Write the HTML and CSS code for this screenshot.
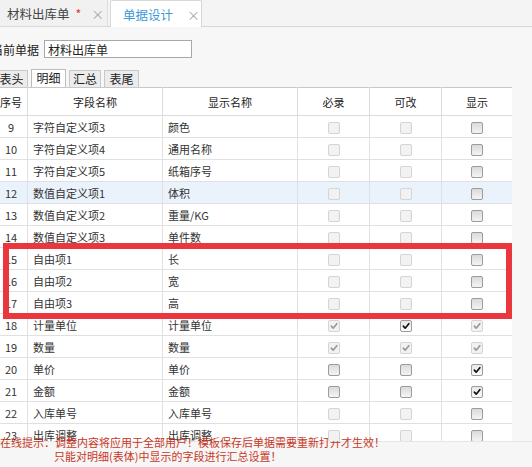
FILE: index.html
```html
<!DOCTYPE html>
<html lang="zh-CN">
<head>
<meta charset="utf-8">
<title>单据设计</title>
<link rel="stylesheet" href="styles.css">
</head>
<body>
<div class="tabbar">
  <div class="tab tab-doc"><span class="tab-title">材料出库单</span><span class="star">*</span><span class="close">×</span></div>
  <div class="tab tab-active"><span class="tab-title">单据设计</span><span class="close">×</span></div>
</div>
<div class="main">
  <div class="current">
    <span class="current-label">当前单据</span>
    <input class="doc-input" type="text" value="材料出库单">
  </div>
  <div class="subtabs">
    <div class="subtab w33">表头</div>
    <div class="subtab w35 active">明细</div>
    <div class="subtab w32">汇总</div>
    <div class="subtab w35">表尾</div>
  </div>
  <div class="grid-wrap">
    <table class="grid">
      <colgroup>
        <col class="c-no"><col class="c-field"><col class="c-name"><col class="c-chk"><col class="c-chk"><col class="c-last">
      </colgroup>
      <thead>
        <tr><th>序号</th><th>字段名称</th><th>显示名称</th><th>必录</th><th>可改</th><th>显示</th></tr>
      </thead>
      <tbody>
        <tr><td class="no">9</td><td>字符自定义项3</td><td>颜色</td><td class="ck"><span class="cb dis"></span></td><td class="ck"><span class="cb dis"></span></td><td class="ck"><span class="cb en"></span></td></tr>
        <tr><td class="no">10</td><td>字符自定义项4</td><td>通用名称</td><td class="ck"><span class="cb dis"></span></td><td class="ck"><span class="cb dis"></span></td><td class="ck"><span class="cb en"></span></td></tr>
        <tr><td class="no">11</td><td>字符自定义项5</td><td>纸箱序号</td><td class="ck"><span class="cb dis"></span></td><td class="ck"><span class="cb dis"></span></td><td class="ck"><span class="cb en"></span></td></tr>
        <tr class="sel"><td class="no">12</td><td>数值自定义项1</td><td>体积</td><td class="ck"><span class="cb dis"></span></td><td class="ck"><span class="cb dis"></span></td><td class="ck"><span class="cb en"></span></td></tr>
        <tr><td class="no">13</td><td>数值自定义项2</td><td>重量/KG</td><td class="ck"><span class="cb dis"></span></td><td class="ck"><span class="cb dis"></span></td><td class="ck"><span class="cb en"></span></td></tr>
        <tr><td class="no">14</td><td>数值自定义项3</td><td>单件数</td><td class="ck"><span class="cb dis"></span></td><td class="ck"><span class="cb dis"></span></td><td class="ck"><span class="cb en"></span></td></tr>
        <tr><td class="no">15</td><td>自由项1</td><td>长</td><td class="ck"><span class="cb dis"></span></td><td class="ck"><span class="cb dis"></span></td><td class="ck"><span class="cb en"></span></td></tr>
        <tr><td class="no">16</td><td>自由项2</td><td>宽</td><td class="ck"><span class="cb dis"></span></td><td class="ck"><span class="cb dis"></span></td><td class="ck"><span class="cb en"></span></td></tr>
        <tr><td class="no">17</td><td>自由项3</td><td>高</td><td class="ck"><span class="cb dis"></span></td><td class="ck"><span class="cb dis"></span></td><td class="ck"><span class="cb en"></span></td></tr>
        <tr><td class="no">18</td><td>计量单位</td><td>计量单位</td>
          <td class="ck"><span class="cb dis on"><svg viewBox="0 0 12 12"><path d="M2.8 6.2 L5 8.6 L9.4 3.2"/></svg></span></td>
          <td class="ck"><span class="cb en on"><svg viewBox="0 0 12 12"><path d="M2.8 6.2 L5 8.6 L9.4 3.2"/></svg></span></td>
          <td class="ck"><span class="cb dis on"><svg viewBox="0 0 12 12"><path d="M2.8 6.2 L5 8.6 L9.4 3.2"/></svg></span></td></tr>
        <tr><td class="no">19</td><td>数量</td><td>数量</td>
          <td class="ck"><span class="cb dis on"><svg viewBox="0 0 12 12"><path d="M2.8 6.2 L5 8.6 L9.4 3.2"/></svg></span></td>
          <td class="ck"><span class="cb dis on"><svg viewBox="0 0 12 12"><path d="M2.8 6.2 L5 8.6 L9.4 3.2"/></svg></span></td>
          <td class="ck"><span class="cb dis on"><svg viewBox="0 0 12 12"><path d="M2.8 6.2 L5 8.6 L9.4 3.2"/></svg></span></td></tr>
        <tr><td class="no">20</td><td>单价</td><td>单价</td>
          <td class="ck"><span class="cb en"></span></td>
          <td class="ck"><span class="cb en"></span></td>
          <td class="ck"><span class="cb en on"><svg viewBox="0 0 12 12"><path d="M2.8 6.2 L5 8.6 L9.4 3.2"/></svg></span></td></tr>
        <tr><td class="no">21</td><td>金额</td><td>金额</td>
          <td class="ck"><span class="cb en"></span></td>
          <td class="ck"><span class="cb en"></span></td>
          <td class="ck"><span class="cb en on"><svg viewBox="0 0 12 12"><path d="M2.8 6.2 L5 8.6 L9.4 3.2"/></svg></span></td></tr>
        <tr><td class="no">22</td><td>入库单号</td><td>入库单号</td><td class="ck"><span class="cb dis"></span></td><td class="ck"><span class="cb dis"></span></td><td class="ck"><span class="cb en"></span></td></tr>
        <tr><td class="no">23</td><td>出库调整</td><td>出库调整</td><td class="ck"><span class="cb dis"></span></td><td class="ck"><span class="cb dis"></span></td><td class="ck"><span class="cb en"></span></td></tr>
      </tbody>
    </table>
  </div>
</div>
<div class="footer">
  <div class="tips">
    <div class="tip-line">在线提示：调整内容将应用于全部用户！模板保存后单据需要重新打开才生效！</div>
    <div class="tip-line indent">只能对明细(表体)中显示的字段进行汇总设置！</div>
  </div>
</div>
<div class="mark-box"></div>
</body>
</html>
```

FILE: styles.css
```css
html, body {
  margin: 0;
  padding: 0;
}
body {
  width: 532px;
  height: 467px;
  overflow: hidden;
  position: relative;
  background: #f7f7f7;
  font-family: "Noto Sans CJK SC", "Liberation Sans", sans-serif;
  font-size: 12px;
  color: #333;
  display: flex;
  flex-direction: column;
}

/* top tabs */
.tabbar {
  height: 26px;
  flex: 0 0 26px;
  display: flex;
  align-items: flex-end;
  border-bottom: 1px solid #d8d8d8;
  background: #f4f4f4;
}
.tab {
  box-sizing: border-box;
  display: flex;
  align-items: center;
  font-size: 12.5px;
}
.tab-doc {
  width: 108px;
  height: 26px;
  padding-left: 7px;
  background: #f1f1f1;
  border-right: 1px solid #dcdcdc;
  color: #444;
}
.tab-doc .star {
  color: #e0362c;
  margin-left: 6px;
}
.tab-doc .close {
  margin-left: 10px;
}
.close {
  color: #a8a8a8;
  font-size: 13px;
}
.tab-active {
  margin-left: 2px;
  width: 92px;
  height: 26px;
  margin-bottom: -1px;
  height: 27px;
  padding-left: 12px;
  background: #fff;
  border: 1px solid #d8d8d8;
  border-bottom: none;
  border-radius: 2px 2px 0 0;
  color: #3c99d8;
}
.tab-active .close {
  margin-left: 14px;
}

/* content */
.main {
  flex: 1 1 auto;
  padding-top: 13px;
  display: flex;
  flex-direction: column;
  min-height: 0;
}
.current {
  display: flex;
  align-items: center;
  height: 18px;
  margin-left: -9px;
  gap: 5px;
}
.current-label {
  width: 48px;
  white-space: nowrap;
  color: #222;
}
.doc-input {
  box-sizing: border-box;
  width: 148px;
  height: 18px;
  margin: 0;
  padding: 0 3px;
  border: 1px solid #a8a8a8;
  background: #fff;
  font-family: inherit;
  font-size: 12px;
  color: #222;
  outline: none;
}

.subtabs {
  display: flex;
  align-items: flex-end;
  gap: 3px;
  height: 18px;
  margin-top: 11px;
  margin-left: -5px;
}
.subtab {
  box-sizing: border-box;
  height: 17px;
  line-height: 15px;
  text-align: center;
  border: 1px solid #c8c8c8;
  border-bottom: none;
  background: #ececec;
  color: #222;
  font-size: 12px;
}
.subtab.active {
  height: 18px;
  background: #fff;
  border-color: #bdbdbd;
}
.w33 { width: 33px; }
.w35 { width: 35px; }
.w32 { width: 32px; }

.grid-wrap {
  flex: 0 0 354px;
  height: 354px;
  overflow: hidden;
  margin-left: -6px;
  width: 518px;
}
.grid {
  width: 518px;
  table-layout: fixed;
  border-collapse: collapse;
  background: #fff;
  font-size: 11px;
  color: #333;
}
.c-no { width: 33px; }
.c-field { width: 135px; }
.c-name { width: 135px; }
.c-chk { width: 72px; }
.c-last { width: 71px; }
.grid th {
  height: 27px;
  padding: 0;
  font-weight: normal;
  color: #222;
  border: 1px solid #dcdcdc;
  border-top: 1px solid #c8c8c8;
  text-align: center;
}
.grid td {
  height: 21px;
  padding: 0 0 0 5px;
  border: 1px solid #e0e0e0;
  white-space: nowrap;
  overflow: hidden;
}
.grid td.no {
  text-align: center;
  padding: 0;
}
.grid td.ck {
  text-align: center;
  padding: 0;
}
.grid tr.sel td {
  background: #eaf2fb;
}

.cb {
  display: inline-block;
  box-sizing: border-box;
  width: 12px;
  height: 12px;
  border-radius: 2px;
  vertical-align: middle;
  position: relative;
  top: -1px;
}
.cb.dis {
  border: 1px solid #d4d4d4;
  background: #f2f2f2;
}
.cb.en {
  border: 1px solid #9c9c9c;
  background: linear-gradient(#dadada, #f4f4f4);
}
.cb svg {
  display: block;
  width: 10px;
  height: 10px;
}
.cb svg path {
  fill: none;
  stroke-width: 2;
  stroke-linecap: round;
  stroke-linejoin: round;
}
.cb.dis svg path { stroke: #9a9a9a; }
.cb.en svg path { stroke: #111; }
.cb.en.on {
  background: linear-gradient(#e8e8e8, #fafafa);
}

/* footer */
.footer {
  flex: 0 0 26px;
  height: 26px;
  background: #f6f6f6;
  border-top: 1px solid #e6e6e6;
  box-sizing: border-box;
}
.tips {
  margin-top: -7px;
  color: #c8361f;
  font-size: 11px;
  line-height: 14px;
  white-space: nowrap;
}
.indent {
  padding-left: 54px;
}

/* annotation overlay */
.mark-box {
  position: absolute;
  left: 3px;
  top: 243px;
  width: 509px;
  height: 76px;
  box-sizing: border-box;
  border: 6px solid #ea373d;
  pointer-events: none;
}
```
